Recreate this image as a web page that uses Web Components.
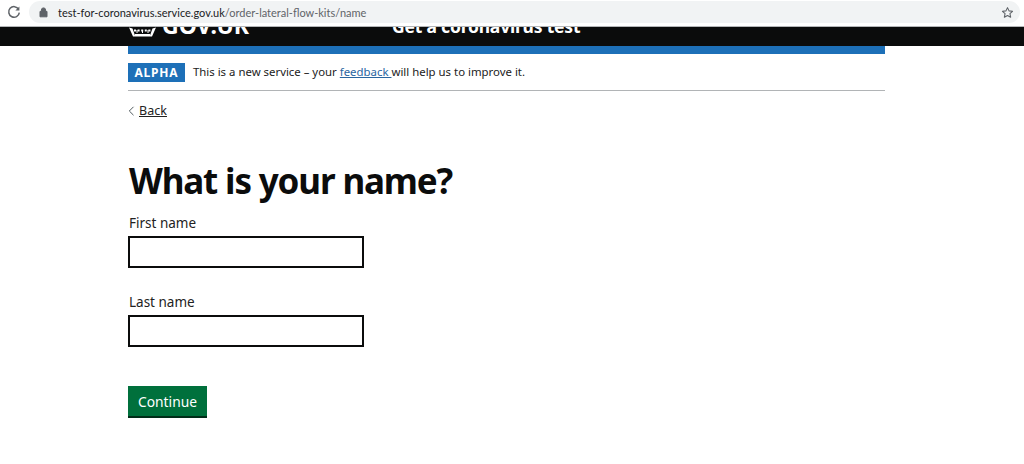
<!DOCTYPE html>
<html lang="en">
<head>
<meta charset="utf-8">
<title>What is your name?</title>
<style>
  html, body { margin: 0; background: #fff; }
  body { font-family: "Noto Sans", "Liberation Sans", sans-serif; color: #0b0c0c; overflow: hidden; height: 464px; }
  main { display: block; width: 757px; margin-left: 128px; }
</style>
</head>
<body>
<browser-bar url-host="test-for-coronavirus.service.gov.uk" url-path="/order-lateral-flow-kits/name"></browser-bar>
<gov-header service="Get a coronavirus test"></gov-header>
<main>
  <phase-banner tag="ALPHA">This is a new service – your <a href="#">feedback </a>will help us to improve it.</phase-banner>
  <back-link>Back</back-link>
  <page-heading>What is your name?</page-heading>
  <text-field label="First name"></text-field>
  <text-field label="Last name"></text-field>
  <gov-button>Continue</gov-button>
</main>

<script>
  class BrowserBar extends HTMLElement {
    constructor() {
      super();
      this.attachShadow({ mode: "open" }).innerHTML = `
        <style>
          :host { display: block; height: 26px; background: #fff; border-bottom: 1px solid #b4b6b8; }
          .row { display: flex; align-items: flex-start; height: 26px; padding: 1px 4px 0 6px; box-sizing: border-box; gap: 7px; }
          .reload { display: block; margin-top: 3px; flex: none; }
          .omni { flex: 1; height: 22px; border-radius: 11px; background: #f1f3f4; display: flex; align-items: center; padding: 0 6px 0 10px; gap: 10px;
                  font: 11px "Lato", "Liberation Sans", sans-serif; color: #5f6368; white-space: nowrap; }
          .url { flex: 1; }
          .host { color: #202124; }
          svg { flex: none; }
        </style>
        <div class="row">
          <svg class="reload" width="16" height="16" viewBox="0 0 16 16" fill="none">
            <path d="M12.6 5.2A5.3 5.3 0 1 0 13.3 8.6" stroke="#5f6368" stroke-width="1.5"/>
            <path d="M13.4 2.4v4h-4z" fill="#5f6368"/>
          </svg>
          <div class="omni">
            <svg width="9" height="11" viewBox="0 0 9 11"><path d="M2.4 4.4V3a2.1 2.1 0 0 1 4.2 0v1.4M1 4.4h7v5.4H1z" fill="#5f6368" stroke="#5f6368"/></svg>
            <span class="url"><span class="host">${this.getAttribute("url-host")}</span>${this.getAttribute("url-path")}</span>
            <svg width="13" height="13" viewBox="0 0 24 24" fill="none" stroke="#5f6368" stroke-width="2" stroke-linejoin="round"><path d="M12 3l2.8 6 6.5.8-4.8 4.4 1.3 6.5L12 17.4l-5.800 3.300 1.300-6.500L2.700 9.800 9.200 9z"/></svg>
          </div>
        </div>`;
    }
  }

  class GovHeader extends HTMLElement {
    constructor() {
      super();
      this.attachShadow({ mode: "open" }).innerHTML = `
        <style>
          :host { display: block; }
          .black { background: #0b0c0c; height: 19px; overflow: hidden; color: #fff; }
          .inner { display: flex; align-items: flex-start; height: 26px; margin: -15px 0 0 129px; }
          .logo { display: flex; align-items: flex-end; gap: 6px; width: 263px; font: 700 23px/26px "Noto Sans", sans-serif; }
          .logo svg { margin-bottom: 1px; }
          .service { font: 700 17.5px/26px "Noto Sans", sans-serif; letter-spacing: -.2px; margin-top: 1px; }
          .stripe { height: 8px; width: 757px; margin-left: 128px; background: #1d70b8; }
        </style>
        <div class="black">
          <div class="inner">
            <div class="logo">
              <svg width="27" height="18" viewBox="0 0 27 18" fill="#fff">
                <path d="M0 8.500l3.500 1 2.700 7.500h14.600l2.700-7.500 3.500-1-4 9H4z"/>
                <path d="M6 15h15v2H6z"/>
                <path d="M5 11.500h17" stroke="#fff" stroke-width="2" stroke-dasharray="2 1.600"/>
                <path d="M8 14v-3M13.500 14v-3M19 14v-3" stroke="#fff"/>
              </svg>
              <span>GOV.UK</span>
            </div>
            <div class="service">${this.getAttribute("service")}</div>
          </div>
        </div>
        <div class="stripe"></div>`;
    }
  }

  class PhaseBanner extends HTMLElement {
    constructor() {
      super();
      this.attachShadow({ mode: "open" }).innerHTML = `
        <style>
          :host { display: block; border-bottom: 1px solid #b1b4b6; }
          .row { display: flex; align-items: center; gap: 8px; height: 36px; font: 11.4px "Noto Sans", sans-serif; color: #222; }
          .tag { background: #1d70b8; color: #fff; font-weight: 700; font-size: 12px; letter-spacing: .8px; height: 19px; line-height: 19px; padding: 0 6.500px; }
          .text { margin-bottom: 1px; }
          ::slotted(a) { color: #2a659f; }
        </style>
        <div class="row"><span class="tag">${this.getAttribute("tag")}</span><span class="text"><slot></slot></span></div>`;
    }
  }

  class BackLink extends HTMLElement {
    constructor() {
      super();
      this.attachShadow({ mode: "open" }).innerHTML = `
        <style>
          :host { display: block; margin-top: 8px; height: 20px; }
          a { display: inline-flex; align-items: center; gap: 4px; color: #222; font: 12.5px/20px "Noto Sans", sans-serif; }
          span { text-decoration: underline; }
        </style>
        <a href="#"><svg width="7" height="10" viewBox="0 0 7 10" fill="none" stroke="#505a5f"><path d="M5.500 .8L1.300 5l4.200 4.200"/></svg><span><slot></slot></span></a>`;
    }
  }

  class PageHeading extends HTMLElement {
    constructor() {
      super();
      this.attachShadow({ mode: "open" }).innerHTML = `
        <style>
          :host { display: block; margin-top: 41px; padding-left: 1px; }
          h1 { margin: 0; font: 700 35px/42px "Noto Sans", sans-serif; letter-spacing: -1.150px; color: #0b0c0c; }
        </style>
        <h1><slot></slot></h1>`;
    }
  }

  class TextField extends HTMLElement {
    constructor() {
      super();
      this.attachShadow({ mode: "open" }).innerHTML = `
        <style>
          :host { display: block; margin-top: 11px; margin-bottom: 24px; }
          label { display: block; font: 13.500px/20px "Noto Sans", sans-serif; color: #222; margin-bottom: 3px; padding-left: 1px; }
          input { display: block; box-sizing: border-box; width: 236px; height: 32px; border: 2px solid #0b0c0c; border-radius: 0; margin: 0; padding: 4px; background: #fff; }
        </style>
        <label for="f">${this.getAttribute("label")}</label>
        <input id="f" type="text">`;
    }
  }

  class GovButton extends HTMLElement {
    constructor() {
      super();
      this.attachShadow({ mode: "open" }).innerHTML = `
        <style>
          :host { display: block; margin-top: 39px; }
          button { display: block; box-sizing: border-box; width: 79px; height: 32px; border: 0; border-bottom: 2px solid #002d18; padding: 1px 0 0; background: #00703c; color: #fff; font: 13.800px/29px "Noto Sans", sans-serif; }
        </style>
        <button type="button"><slot></slot></button>`;
    }
  }

  customElements.define("browser-bar", BrowserBar);
  customElements.define("gov-header", GovHeader);
  customElements.define("phase-banner", PhaseBanner);
  customElements.define("back-link", BackLink);
  customElements.define("page-heading", PageHeading);
  customElements.define("text-field", TextField);
  customElements.define("gov-button", GovButton);
</script>
</body>
</html>
